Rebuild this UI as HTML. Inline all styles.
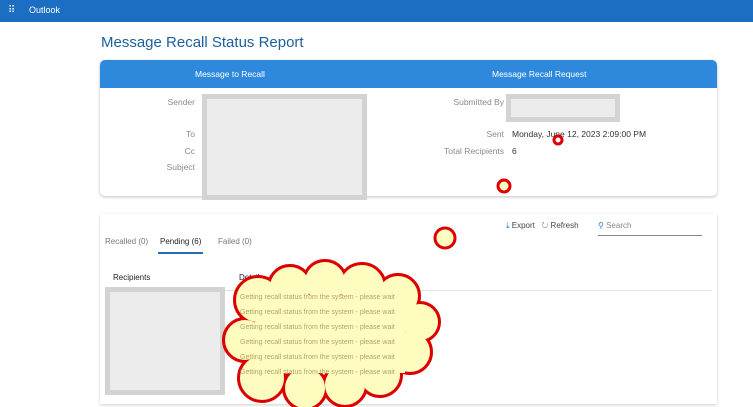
<!DOCTYPE html>
<html><head><style>
body{margin:0;width:753px;height:407px;overflow:hidden;background:#fff;font-family:"Liberation Sans",sans-serif;position:relative}
.a{position:absolute}
.lbl{color:#8a8a8a;font-size:8.5px;text-align:right}
.t{font-size:8.5px;color:#333}
.box{position:absolute;background:#ececec;border:5px solid #d3d3d3;box-sizing:border-box}
.w{position:absolute;left:240px;font-size:7px;color:#b0a56a}
</style></head><body>
<div class="a" style="left:0;top:0;width:753px;height:22px;background:#1b6ec2"></div>
<div class="a" style="left:8px;top:5px;color:#fff;font-size:10px;letter-spacing:-1px">⠿</div>
<div class="a" style="left:29px;top:5px;color:#fff;font-size:9px">Outlook</div>
<div class="a" style="left:101px;top:34px;color:#1d5f9e;font-size:15px">Message Recall Status Report</div>

<div class="a" style="left:100px;top:60px;width:617px;height:136px;border-radius:5px;box-shadow:0 1px 3px rgba(0,0,0,.25);background:#fff;overflow:hidden">
 <div style="height:28px;background:#2e88db"></div>
</div>
<div class="a" style="left:195px;top:69px;color:#fff;font-size:8.5px">Message to Recall</div>
<div class="a" style="left:492px;top:69px;color:#fff;font-size:8.5px">Message Recall Request</div>
<div class="a lbl" style="left:140px;top:97px;width:55px">Sender</div>
<div class="a lbl" style="left:140px;top:129px;width:55px">To</div>
<div class="a lbl" style="left:140px;top:146px;width:55px">Cc</div>
<div class="a lbl" style="left:140px;top:162px;width:55px">Subject</div>
<div class="a lbl" style="left:420px;top:97px;width:84px">Submitted By</div>
<div class="a lbl" style="left:420px;top:129px;width:84px">Sent</div>
<div class="a lbl" style="left:420px;top:146px;width:84px">Total Recipients</div>
<div class="a t" style="left:512px;top:129px">Monday, June 12, 2023 2:09:00 PM</div>
<div class="a t" style="left:512px;top:146px">6</div>
<div class="box" style="left:202px;top:94px;width:165px;height:106px"></div>
<div class="box" style="left:506px;top:94px;width:114px;height:28px"></div>

<div class="a" style="left:100px;top:214px;width:617px;height:190px;box-shadow:0 1px 3px rgba(0,0,0,.2);background:#fff"></div>
<div class="a" style="left:105px;top:237px;font-size:8px;color:#777">Recalled (0)</div>
<div class="a" style="left:160px;top:237px;font-size:8px;color:#222">Pending (6)</div>
<div class="a" style="left:158px;top:252px;width:45px;height:2px;background:#2b6cb0"></div>
<div class="a" style="left:218px;top:237px;font-size:8px;color:#777">Failed (0)</div>
<div class="a" style="left:506px;top:221px;font-size:8px;color:#444"><span style="color:#2b78d0">⤓</span> Export &nbsp; <span style="color:#2b78d0">↻</span> Refresh</div>
<div class="a" style="left:598px;top:221px;width:104px;height:14px;border-bottom:1px solid #888;font-size:8px;color:#888"><span style="color:#2b78d0">⚲</span> Search</div>
<div class="a" style="left:113px;top:273px;font-size:8px;color:#222">Recipients</div>
<div class="a" style="left:239px;top:273px;font-size:8px;color:#222">Details</div>
<div class="a" style="left:105px;top:290px;width:607px;height:1px;background:#e4e4e4"></div>
<div class="box" style="left:105px;top:287px;width:120px;height:108px"></div>

<svg class="a" style="left:0;top:0" width="753" height="407">
<g fill="#d00" stroke="#d00" stroke-width="6">
<circle cx="258" cy="300" r="22"/><circle cx="290" cy="287" r="20"/><circle cx="325" cy="282" r="20"/><circle cx="362" cy="287" r="22"/><circle cx="398" cy="296" r="20"/><circle cx="420" cy="322" r="18"/><circle cx="410" cy="352" r="20"/><circle cx="380" cy="375" r="20"/><circle cx="345" cy="385" r="20"/><circle cx="305" cy="388" r="20"/><circle cx="262" cy="378" r="22"/><circle cx="245" cy="340" r="20"/>
</g>
<g fill="#fffcc0">
<circle cx="258" cy="300" r="22"/><circle cx="290" cy="287" r="20"/><circle cx="325" cy="282" r="20"/><circle cx="362" cy="287" r="22"/><circle cx="398" cy="296" r="20"/><circle cx="420" cy="322" r="18"/><circle cx="410" cy="352" r="20"/><circle cx="380" cy="375" r="20"/><circle cx="345" cy="385" r="20"/><circle cx="305" cy="388" r="20"/><circle cx="262" cy="378" r="22"/><circle cx="245" cy="340" r="20"/><rect x="255" y="295" width="150" height="78"/>
</g>
<circle cx="504" cy="186" r="6" fill="#fffcc0" stroke="#d00" stroke-width="3"/>
<circle cx="445" cy="238" r="10" fill="#fffcc0" stroke="#d00" stroke-width="3"/>
<circle cx="558" cy="140" r="4" fill="#fff" stroke="#d00" stroke-width="3"/>
</svg>
<div class="w" style="top:294px">Getting recall status from the system - please wait</div>
<div class="w" style="top:309px">Getting recall status from the system - please wait</div>
<div class="w" style="top:324px">Getting recall status from the system - please wait</div>
<div class="w" style="top:339px">Getting recall status from the system - please wait</div>
<div class="w" style="top:354px">Getting recall status from the system - please wait</div>
<div class="w" style="top:369px">Getting recall status from the system - please wait</div>
</body></html>
